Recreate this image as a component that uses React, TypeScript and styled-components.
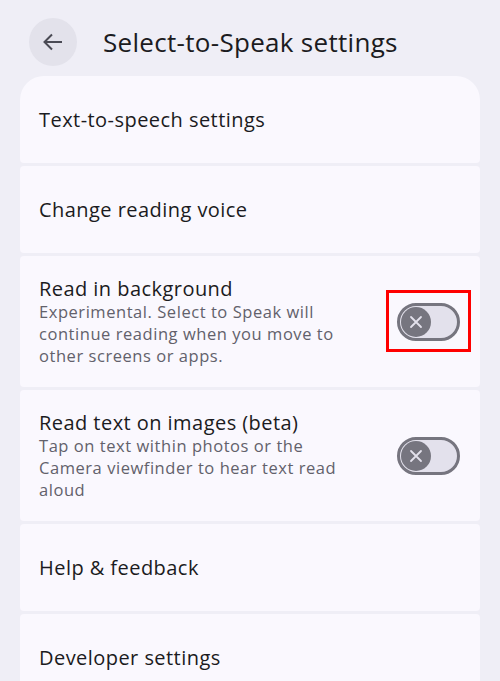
import React from "react";
import styled, { createGlobalStyle } from "styled-components";

const Global = createGlobalStyle`
  html, body { margin: 0; padding: 0; background: #EFEEF6; }
  body { font-family: "Open Sans", Roboto, sans-serif; -webkit-font-smoothing: antialiased; }
`;

const Page = styled.div`
  width: 500px;
  height: 681px;
  overflow: hidden;
  background: #EFEEF6;
`;

const Header = styled.header`
  display: flex;
  align-items: center;
  gap: 26px;
  height: 48px;
  padding: 18px 0 10px 29px;
`;

const BackButton = styled.button`
  width: 48px;
  height: 48px;
  border-radius: 50%;
  border: none;
  background: #E3E2EB;
  display: flex;
  align-items: center;
  justify-content: center;
  padding: 0;
`;

const Title = styled.h1`
  margin: 0;
  font-size: 26px;
  font-weight: 400;
  color: #1B1B21;
  letter-spacing: 0.3px;
`;

const List = styled.div`
  display: flex;
  flex-direction: column;
  gap: 3px;
  margin: 0 20px;
`;

const Card = styled.div<{ $first?: boolean; $tall?: boolean }>`
  background: #FAF8FE;
  border-radius: ${(p) => (p.$first ? "24px 24px 4px 4px" : "4px")};
  min-height: ${(p) => (p.$tall ? "131px" : "87px")};
  box-sizing: border-box;
  padding: 0 19px;
  display: flex;
  align-items: center;
  justify-content: space-between;
  gap: 16px;
`;

const Texts = styled.div`
  max-width: 312px;
  display: flex;
  flex-direction: column;
`;

const ItemTitle = styled.div`
  font-size: 20px;
  line-height: 24px;
  color: #1B1B21;
  letter-spacing: 0.45px;
`;

const ItemSub = styled.div`
  font-size: 16.5px;
  line-height: 22px;
  color: #62616B;
  letter-spacing: 0.55px;
`;

const SwitchWrap = styled.div`
  position: relative;
  margin-right: 1px;
  flex: none;
`;

const Track = styled.div`
  width: 63px;
  height: 38px;
  box-sizing: border-box;
  border-radius: 19px;
  border: 3px solid #76757F;
  background: #E3E1EC;
  display: flex;
  align-items: center;
  padding-left: 1px;
`;

const Thumb = styled.div`
  width: 30px;
  height: 30px;
  border-radius: 50%;
  background: #76757F;
  display: flex;
  align-items: center;
  justify-content: center;
`;

const Highlight = styled.div`
  position: absolute;
  left: -11px;
  top: -13px;
  width: 85px;
  height: 62px;
  box-sizing: border-box;
  border: 3px solid #FF0000;
`;

const Switch = ({ marked }: { marked?: boolean }) => (
  <SwitchWrap>
    <Track>
      <Thumb>
        <svg width="14" height="14" viewBox="0 0 14 14">
          <path d="M2 2 L12 12 M12 2 L2 12" stroke="#E3E1EC" strokeWidth="1.8" strokeLinecap="round" />
        </svg>
      </Thumb>
    </Track>
    {marked && <Highlight />}
  </SwitchWrap>
);

export default function App() {
  return (
    <Page>
      <Global />
      <Header>
        <BackButton aria-label="Back">
          <svg width="24" height="24" viewBox="0 0 24 24" fill="none">
            <path d="M21 12H4.5 M11 4.5 L3.5 12 L11 19.5" stroke="#4A4A54" strokeWidth="2" />
          </svg>
        </BackButton>
        <Title>Select-to-Speak settings</Title>
      </Header>
      <List>
        <Card $first>
          <Texts>
            <ItemTitle>Text-to-speech settings</ItemTitle>
          </Texts>
        </Card>
        <Card>
          <Texts>
            <ItemTitle>Change reading voice</ItemTitle>
          </Texts>
        </Card>
        <Card $tall>
          <Texts>
            <ItemTitle>Read in background</ItemTitle>
            <ItemSub>
              Experimental. Select to Speak will continue reading when you move to other screens or apps.
            </ItemSub>
          </Texts>
          <Switch marked />
        </Card>
        <Card $tall>
          <Texts>
            <ItemTitle>Read text on images (beta)</ItemTitle>
            <ItemSub>Tap on text within photos or the Camera viewfinder to hear text read aloud</ItemSub>
          </Texts>
          <Switch />
        </Card>
        <Card>
          <Texts>
            <ItemTitle>Help &amp; feedback</ItemTitle>
          </Texts>
        </Card>
        <Card>
          <Texts>
            <ItemTitle>Developer settings</ItemTitle>
          </Texts>
        </Card>
      </List>
    </Page>
  );
}
